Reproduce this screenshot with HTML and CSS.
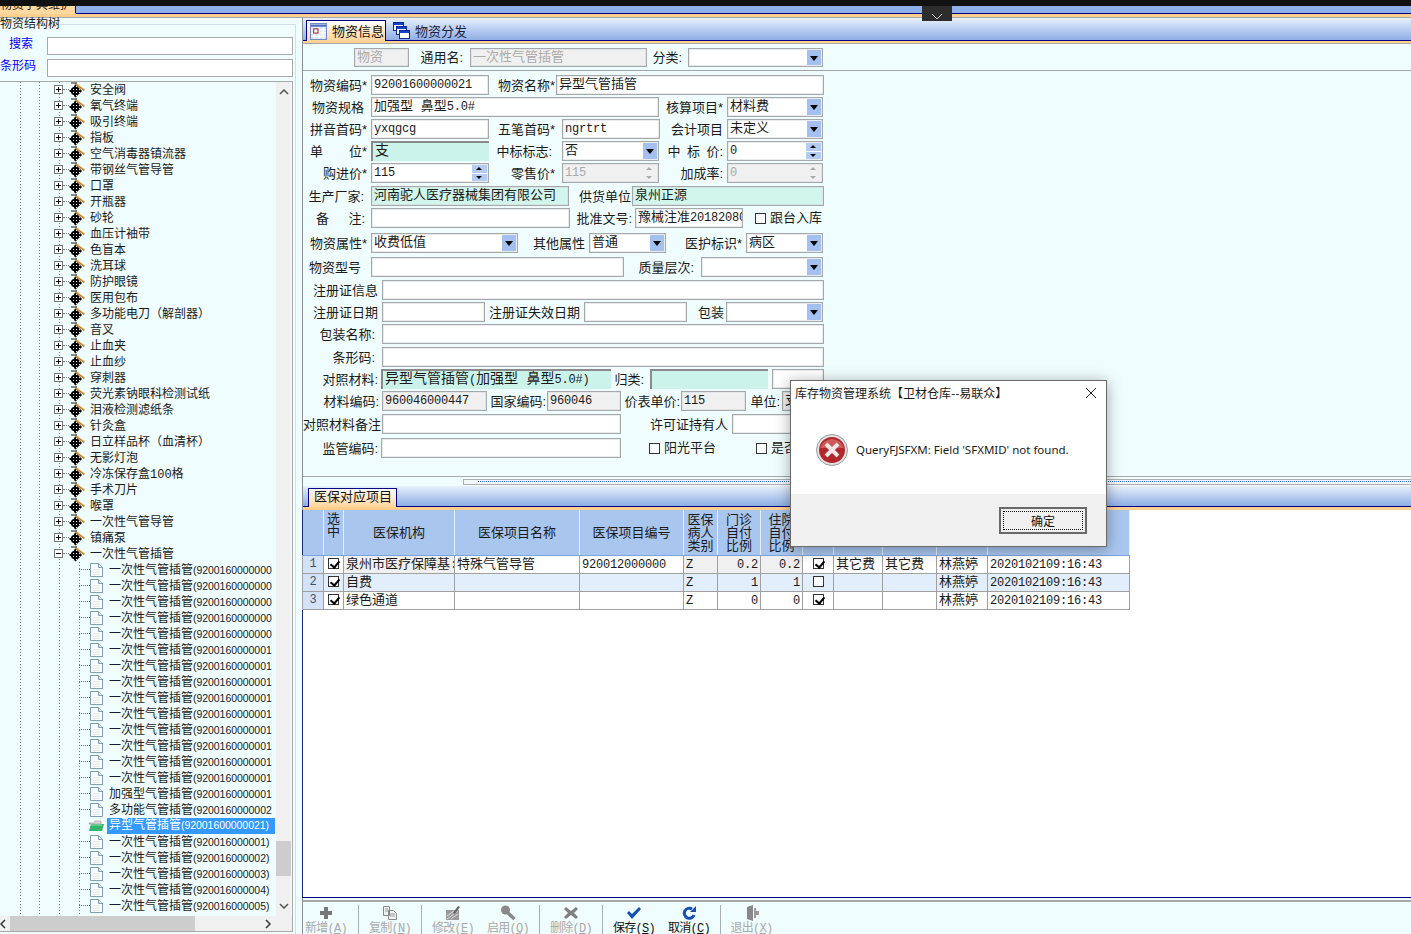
FILE: index.html
```html
<!DOCTYPE html>
<html lang="zh-CN">
<head>
<meta charset="UTF-8" />
<title>物资字典维护</title>
<link rel="stylesheet" href="styles.css">
</head>
<body>
<svg class="defs" width="0" height="0" aria-hidden="true">
  <defs>
    <pattern id="chk" width="3" height="3" patternUnits="userSpaceOnUse">
      <rect width="3" height="3" fill="#000"/><rect x="1" y="1" width="1" height="1" fill="#fff"/>
    </pattern>
    <symbol id="i-node" viewBox="0 0 16 16">
      <path d="M0 9 6.500 2.500 13 9l-6.500 6.500z" fill="url(#chk)"/>
      <path d="M6 1.500 15.500 8.500" stroke="#d08a30" stroke-width="2" fill="none"/>
      <path d="M2 1h6" stroke="#222" stroke-width="1"/>
    </symbol>
    <symbol id="i-plus" viewBox="0 0 9 9">
      <rect x=".5" y=".5" width="8" height="8" fill="#fff" stroke="#777"/>
      <path d="M2 4.500h5M4.500 2v5" stroke="#000"/>
    </symbol>
    <symbol id="i-minus" viewBox="0 0 9 9">
      <rect x=".5" y=".5" width="8" height="8" fill="#fff" stroke="#777"/>
      <path d="M2 4.500h5" stroke="#000"/>
    </symbol>
    <symbol id="i-file" viewBox="0 0 13 14">
      <path d="M.5.500h8l4 4v9H.5z" fill="#fbfdff" stroke="#7f9db9"/>
      <path d="M8.500.500v4h4" fill="#dce6f4" stroke="#7f9db9"/>
      <path d="M3 6.500h7M3 9h7M3 11.500h7" stroke="#dfe6ee"/>
    </symbol>
    <symbol id="i-folder" viewBox="0 0 17 12">
      <path d="M1 3h5l1-2h6v3H1z" fill="#d8d8d8" stroke="#999" stroke-width=".6"/>
      <path d="M1 11 3 4h13l-2 7z" fill="#35b56a"/>
      <path d="M3 5h11" stroke="#8fe0ae"/>
    </symbol>
    <symbol id="i-cal" viewBox="0 0 16 16">
      <rect x=".5" y=".5" width="15" height="15" fill="#dbe6fa" stroke="#6f8bc9"/>
      <path d="M1 2.500h14" stroke="#4f6fc0" stroke-width="2"/>
      <path d="M1 6.500h14M1 9.500h14M1 12.500h14M4.500 4v11M8.500 4v11M12.500 4v11" stroke="#fff"/>
      <rect x="3.500" y="5.500" width="4" height="4" fill="#fff" stroke="#b02020"/>
    </symbol>
    <symbol id="i-wins" viewBox="0 0 17 17">
      <rect x=".5" y=".5" width="10" height="8" fill="#fff" stroke="#0a2a9a"/><path d="M1 2h9" stroke="#1440c8" stroke-width="2"/>
      <rect x="3.500" y="4.500" width="10" height="8" fill="#fff" stroke="#0a2a9a"/><path d="M4 6h9" stroke="#1440c8" stroke-width="2"/>
      <rect x="6.500" y="8.500" width="10" height="8" fill="#fff" stroke="#0a2a9a"/><path d="M7 10h9" stroke="#1440c8" stroke-width="2"/>
    </symbol>
    <symbol id="t-add" viewBox="0 0 16 16"><path d="M6 2h4v4h4v4h-4v4H6v-4H2V6h4z" fill="#777"/></symbol>
    <symbol id="t-copy" viewBox="0 0 16 16">
      <path d="M1.500 1.500h6v9h-6zM6.500 5.500h5l3 3v6h-8z" fill="#eef3f3" stroke="#888"/>
      <path d="M3 4h3M3 6h3M8 9h5M8 11h5" stroke="#999"/>
    </symbol>
    <symbol id="t-edit" viewBox="0 0 16 16">
      <rect x="1" y="5" width="13" height="10" fill="#9a9a9a"/>
      <path d="M2 14 13 6M2 11l7-5M6 14l7-5" stroke="#ddd"/>
      <path d="M8 8 13 1l2 1-5 7z" fill="#666"/>
    </symbol>
    <symbol id="t-key" viewBox="0 0 16 16">
      <circle cx="5.500" cy="5" r="4.500" fill="#888"/>
      <path d="m8 8 6.500 6" stroke="#888" stroke-width="3.500"/>
    </symbol>
    <symbol id="t-del" viewBox="0 0 16 16"><path d="m3 2 5 4 5-4 2 2-4 4 4 4-2 2-5-4-5 4-2-2 4-4-4-4z" fill="#808080"/></symbol>
    <symbol id="t-ok" viewBox="0 0 16 16"><path d="m1 8 2-2 3 3 7-7 2 2-9 10z" fill="#1450b4"/></symbol>
    <symbol id="t-undo" viewBox="0 0 16 16">
      <path d="M13 10a5 5 0 1 1-2-6" fill="none" stroke="#1450b4" stroke-width="3"/>
      <path d="M9 7h6V1z" fill="#1450b4"/>
    </symbol>
    <symbol id="t-exit" viewBox="0 0 16 16">
      <path d="M3 2 9 0v16l-6-2z" fill="#888"/>
      <path d="M10 3h2v3h3v4h-3v3h-2z" fill="#999"/>
    </symbol>
    <symbol id="i-err" viewBox="0 0 32 32">
      <circle cx="16" cy="16" r="15.500" fill="#e4e4e4" stroke="#9a9a9a"/>
      <circle cx="16" cy="16" r="13" fill="#b3262b"/>
      <path d="M4 14a12.500 12.500 0 0 1 24 0z" fill="#cf5a5a"/>
      <path d="m10 10 12 12M22 10 10 22" stroke="#f4e6e6" stroke-width="4"/>
    </symbol>
  </defs>
</svg>

<div class="topbar"></div>
<div class="mdi-tabs">
  <div class="mdi-tab">物资字典维护</div>
</div>
<button class="collapse" aria-label="collapse">
  <svg width="12" height="7" viewBox="0 0 12 7"><path d="M1 1l5 5 5-5" fill="none" stroke="#ccc"/></svg>
</button>

<div class="app">
  <aside class="side">
    <div class="group">
      <div class="group-cap">物资结构树</div>
      <div class="find-row"><label class="find-label">搜索</label><div class="find-box"></div></div>
      <div class="find-row"><label class="find-label find-left">条形码</label><div class="find-box"></div></div>
      <div class="tree-box">
        <div class="tree-main">
          <div class="tree">
            <div class="node"><svg class="exp"><use href="#i-plus"/></svg><i class="dash"></i><svg class="ico"><use href="#i-node"/></svg><span>安全阀</span></div>
            <div class="node"><svg class="exp"><use href="#i-plus"/></svg><i class="dash"></i><svg class="ico"><use href="#i-node"/></svg><span>氧气终端</span></div>
            <div class="node"><svg class="exp"><use href="#i-plus"/></svg><i class="dash"></i><svg class="ico"><use href="#i-node"/></svg><span>吸引终端</span></div>
            <div class="node"><svg class="exp"><use href="#i-plus"/></svg><i class="dash"></i><svg class="ico"><use href="#i-node"/></svg><span>指板</span></div>
            <div class="node"><svg class="exp"><use href="#i-plus"/></svg><i class="dash"></i><svg class="ico"><use href="#i-node"/></svg><span>空气消毒器镇流器</span></div>
            <div class="node"><svg class="exp"><use href="#i-plus"/></svg><i class="dash"></i><svg class="ico"><use href="#i-node"/></svg><span>带钢丝气管导管</span></div>
            <div class="node"><svg class="exp"><use href="#i-plus"/></svg><i class="dash"></i><svg class="ico"><use href="#i-node"/></svg><span>口罩</span></div>
            <div class="node"><svg class="exp"><use href="#i-plus"/></svg><i class="dash"></i><svg class="ico"><use href="#i-node"/></svg><span>开瓶器</span></div>
            <div class="node"><svg class="exp"><use href="#i-plus"/></svg><i class="dash"></i><svg class="ico"><use href="#i-node"/></svg><span>砂轮</span></div>
            <div class="node"><svg class="exp"><use href="#i-plus"/></svg><i class="dash"></i><svg class="ico"><use href="#i-node"/></svg><span>血压计袖带</span></div>
            <div class="node"><svg class="exp"><use href="#i-plus"/></svg><i class="dash"></i><svg class="ico"><use href="#i-node"/></svg><span>色盲本</span></div>
            <div class="node"><svg class="exp"><use href="#i-plus"/></svg><i class="dash"></i><svg class="ico"><use href="#i-node"/></svg><span>洗耳球</span></div>
            <div class="node"><svg class="exp"><use href="#i-plus"/></svg><i class="dash"></i><svg class="ico"><use href="#i-node"/></svg><span>防护眼镜</span></div>
            <div class="node"><svg class="exp"><use href="#i-plus"/></svg><i class="dash"></i><svg class="ico"><use href="#i-node"/></svg><span>医用包布</span></div>
            <div class="node"><svg class="exp"><use href="#i-plus"/></svg><i class="dash"></i><svg class="ico"><use href="#i-node"/></svg><span>多功能电刀（解剖器）</span></div>
            <div class="node"><svg class="exp"><use href="#i-plus"/></svg><i class="dash"></i><svg class="ico"><use href="#i-node"/></svg><span>音叉</span></div>
            <div class="node"><svg class="exp"><use href="#i-plus"/></svg><i class="dash"></i><svg class="ico"><use href="#i-node"/></svg><span>止血夹</span></div>
            <div class="node"><svg class="exp"><use href="#i-plus"/></svg><i class="dash"></i><svg class="ico"><use href="#i-node"/></svg><span>止血纱</span></div>
            <div class="node"><svg class="exp"><use href="#i-plus"/></svg><i class="dash"></i><svg class="ico"><use href="#i-node"/></svg><span>穿刺器</span></div>
            <div class="node"><svg class="exp"><use href="#i-plus"/></svg><i class="dash"></i><svg class="ico"><use href="#i-node"/></svg><span>荧光素钠眼科检测试纸</span></div>
            <div class="node"><svg class="exp"><use href="#i-plus"/></svg><i class="dash"></i><svg class="ico"><use href="#i-node"/></svg><span>泪液检测滤纸条</span></div>
            <div class="node"><svg class="exp"><use href="#i-plus"/></svg><i class="dash"></i><svg class="ico"><use href="#i-node"/></svg><span>针灸盒</span></div>
            <div class="node"><svg class="exp"><use href="#i-plus"/></svg><i class="dash"></i><svg class="ico"><use href="#i-node"/></svg><span>日立样品杯（血清杯）</span></div>
            <div class="node"><svg class="exp"><use href="#i-plus"/></svg><i class="dash"></i><svg class="ico"><use href="#i-node"/></svg><span>无影灯泡</span></div>
            <div class="node"><svg class="exp"><use href="#i-plus"/></svg><i class="dash"></i><svg class="ico"><use href="#i-node"/></svg><span>冷冻保存盒100格</span></div>
            <div class="node"><svg class="exp"><use href="#i-plus"/></svg><i class="dash"></i><svg class="ico"><use href="#i-node"/></svg><span>手术刀片</span></div>
            <div class="node"><svg class="exp"><use href="#i-plus"/></svg><i class="dash"></i><svg class="ico"><use href="#i-node"/></svg><span>喉罩</span></div>
            <div class="node"><svg class="exp"><use href="#i-plus"/></svg><i class="dash"></i><svg class="ico"><use href="#i-node"/></svg><span>一次性气管导管</span></div>
            <div class="node"><svg class="exp"><use href="#i-plus"/></svg><i class="dash"></i><svg class="ico"><use href="#i-node"/></svg><span>镇痛泵</span></div>
            <div class="node"><svg class="exp"><use href="#i-minus"/></svg><i class="dash"></i><svg class="ico"><use href="#i-node"/></svg><span>一次性气管插管</span></div>
            <div class="kids">
              <div class="leaf"><i class="dash"></i><svg class="doc"><use href="#i-file"/></svg><span>一次性气管插管<b>(9200160000000</b></span></div>
              <div class="leaf"><i class="dash"></i><svg class="doc"><use href="#i-file"/></svg><span>一次性气管插管<b>(9200160000000</b></span></div>
              <div class="leaf"><i class="dash"></i><svg class="doc"><use href="#i-file"/></svg><span>一次性气管插管<b>(9200160000000</b></span></div>
              <div class="leaf"><i class="dash"></i><svg class="doc"><use href="#i-file"/></svg><span>一次性气管插管<b>(9200160000000</b></span></div>
              <div class="leaf"><i class="dash"></i><svg class="doc"><use href="#i-file"/></svg><span>一次性气管插管<b>(9200160000000</b></span></div>
              <div class="leaf"><i class="dash"></i><svg class="doc"><use href="#i-file"/></svg><span>一次性气管插管<b>(9200160000001</b></span></div>
              <div class="leaf"><i class="dash"></i><svg class="doc"><use href="#i-file"/></svg><span>一次性气管插管<b>(9200160000001</b></span></div>
              <div class="leaf"><i class="dash"></i><svg class="doc"><use href="#i-file"/></svg><span>一次性气管插管<b>(9200160000001</b></span></div>
              <div class="leaf"><i class="dash"></i><svg class="doc"><use href="#i-file"/></svg><span>一次性气管插管<b>(9200160000001</b></span></div>
              <div class="leaf"><i class="dash"></i><svg class="doc"><use href="#i-file"/></svg><span>一次性气管插管<b>(9200160000001</b></span></div>
              <div class="leaf"><i class="dash"></i><svg class="doc"><use href="#i-file"/></svg><span>一次性气管插管<b>(9200160000001</b></span></div>
              <div class="leaf"><i class="dash"></i><svg class="doc"><use href="#i-file"/></svg><span>一次性气管插管<b>(9200160000001</b></span></div>
              <div class="leaf"><i class="dash"></i><svg class="doc"><use href="#i-file"/></svg><span>一次性气管插管<b>(9200160000001</b></span></div>
              <div class="leaf"><i class="dash"></i><svg class="doc"><use href="#i-file"/></svg><span>一次性气管插管<b>(9200160000001</b></span></div>
              <div class="leaf"><i class="dash"></i><svg class="doc"><use href="#i-file"/></svg><span>加强型气管插管<b>(9200160000001</b></span></div>
              <div class="leaf"><i class="dash"></i><svg class="doc"><use href="#i-file"/></svg><span>多功能气管插管<b>(9200160000002</b></span></div>
              <div class="leaf current"><svg class="opened"><use href="#i-folder"/></svg><span>异型气管插管<b>(92001600000021)</b></span></div>
              <div class="leaf"><i class="dash"></i><svg class="doc"><use href="#i-file"/></svg><span>一次性气管插管<b>(920016000001)</b></span></div>
              <div class="leaf"><i class="dash"></i><svg class="doc"><use href="#i-file"/></svg><span>一次性气管插管<b>(920016000002)</b></span></div>
              <div class="leaf"><i class="dash"></i><svg class="doc"><use href="#i-file"/></svg><span>一次性气管插管<b>(920016000003)</b></span></div>
              <div class="leaf"><i class="dash"></i><svg class="doc"><use href="#i-file"/></svg><span>一次性气管插管<b>(920016000004)</b></span></div>
              <div class="leaf"><i class="dash"></i><svg class="doc"><use href="#i-file"/></svg><span>一次性气管插管<b>(920016000005)</b></span></div>
            </div>
          </div>
          <div class="vscroll">
            <svg class="chev" viewBox="0 0 10 6"><path d="M1 5l4-4 4 4" fill="none" stroke="#555" stroke-width="1.500"/></svg>
            <div class="vthumb"></div>
            <svg class="chev" viewBox="0 0 10 6"><path d="M1 1l4 4 4-4" fill="none" stroke="#555" stroke-width="1.500"/></svg>
          </div>
        </div>
        <div class="hscroll">
          <svg class="chev-h" viewBox="0 0 6 10"><path d="M5 1 1 5l4 4" fill="none" stroke="#333" stroke-width="1.500"/></svg>
          <div class="hthumb"></div>
          <svg class="chev-h" viewBox="0 0 6 10"><path d="M1 1l4 4-4 4" fill="none" stroke="#333" stroke-width="1.500"/></svg>
        </div>
      </div>
    </div>
  </aside>

  <main class="pane">
    <div class="tabs">
      <div class="tab active"><svg class="tab-ico"><use href="#i-cal"/></svg><span class="tab-text">物资信息</span></div>
      <div class="tab"><svg class="tab-ico"><use href="#i-wins"/></svg><span class="tab-text">物资分发</span></div>
    </div>
    <div class="tabs-line"></div>

    <section class="form">
      <div class="form-head">
        <div class="row head-row">
          <div class="fld off w-55 ml-51">物资</div>
          <label class="w-61 pr-7">通用名:</label>
          <div class="fld off w-177">一次性气管插管</div>
          <label class="w-41 pr-6">分类:</label>
          <div class="fld w-135"><span class="arrow"></span></div>
        </div>
      </div>
      <div class="form-body">
        <div class="row"><label class="w-68">物资编码*</label><div class="fld code w-118">92001600000021</div><label class="w-67 pr-1">物资名称*</label><div class="fld w-268">异型气管插管</div></div>
        <div class="row"><label class="w-68 pr-7">物资规格</label><div class="fld w-288">加强型 鼻型<span class="code">5.0#</span></div><label class="w-68">核算项目*</label><div class="fld w-96">材料费<span class="arrow"></span></div></div>
        <div class="row"><label class="w-68">拼音首码*</label><div class="fld code w-118">yxqgcg</div><label class="w-73 pr-7">五笔首码*</label><div class="fld code w-98">ngrtrt</div><label class="w-67">会计项目</label><div class="fld w-96">未定义<span class="arrow"></span></div></div>
        <div class="row"><label class="w-68">单&emsp;&emsp;位*</label><div class="fld big teal-in w-118">支</div><label class="w-73 pr-10">中标标志:</label><div class="fld w-97">否<span class="arrow"></span></div><label class="w-68">中&ensp;标&ensp;价:</label><div class="fld code w-96">0<span class="spin"><i></i><i></i></span></div></div>
        <div class="row"><label class="w-68">购进价*</label><div class="fld code w-118">115<span class="spin"><i></i><i></i></span></div><label class="w-73 pr-7">零售价*</label><div class="fld off code w-97">115<span class="spin dim"><i></i><i></i></span></div><label class="w-68">加成率:</label><div class="fld off code w-96">0<span class="spin dim"><i></i><i></i></span></div></div>
        <div class="row mt-1"><label class="w-68 pr-7">生产厂家:</label><div class="fld teal w-198">河南驼人医疗器械集团有限公司</div><label class="w-63 pr-1">供货单位</label><div class="fld teal w-192">泉州正源</div></div>
        <div class="row"><label class="w-68 pr-6">备&emsp;&ensp;注:</label><div class="fld w-199">&nbsp;</div><label class="w-65 pr-3">批准文号:</label><div class="fld w-108">豫械注准<span class="code">20182080</span></div><span class="check ml-12"></span><span class="check-text">跟台入库</span></div>
        <div class="row mt-3"><label class="w-68">物资属性*</label><div class="fld w-147">收费低值<span class="arrow"></span></div><label class="w-71">其他属性</label><div class="fld w-77">普通<span class="arrow"></span></div><label class="w-80">医护标识*</label><div class="fld w-77">病区<span class="arrow"></span></div></div>
        <div class="row mt-2"><label class="w-68 pr-10">物资型号</label><div class="fld w-253">&nbsp;</div><label class="w-77 pr-7">质量层次:</label><div class="fld w-122"><span class="arrow"></span></div></div>
        <div class="row mt-1"><label class="w-79">注册证信息</label><div class="fld w-442">&nbsp;</div></div>
        <div class="row"><label class="w-79">注册证日期</label><div class="fld w-103">&nbsp;</div><label class="w-99">注册证失效日期</label><div class="fld w-103">&nbsp;</div><label class="w-39 pr-2">包装</label><div class="fld w-97"><span class="arrow"></span></div></div>
        <div class="row"><label class="w-79 pr-7">包装名称:</label><div class="fld w-442">&nbsp;</div></div>
        <div class="row mt-1"><label class="w-79 pr-7">条形码:</label><div class="fld w-442">&nbsp;</div></div>
        <div class="row"><label class="w-78 pr-3">对照材料:</label><div class="fld big teal-in w-230">异型气管插管<span class="code">(</span>加强型 鼻型<span class="code">5.0#)</span></div><label class="w-39 pr-6">归类:</label><div class="fld teal-in w-118">&nbsp;</div><div class="fld ml-4 w-52">&nbsp;</div></div>
        <div class="row"><label class="w-79 pr-3">材料编码:</label><div class="fld gray code w-105">960046000447</div><label class="w-60 pr-1">国家编码:</label><div class="fld gray code w-74">960046</div><label class="w-60 pr-1">价表单价:</label><div class="fld gray code w-65">115</div><label class="w-36 pr-2">单位:</label><div class="fld gray w-42">支</div></div>
        <div class="row mt-1"><label class="w-79 pr-1">对照材料备注</label><div class="fld w-239">&nbsp;</div><label class="w-111">许可证持有人</label><div class="fld w-92">&nbsp;</div></div>
        <div class="row mt-2"><label class="w-78 pr-3">监管编码:</label><div class="fld w-240">&nbsp;</div><span class="check ml-28"></span><span class="check-text">阳光平台</span><span class="check ml-40"></span><span class="check-text">是否</span></div>
      </div>
      <div class="splitter"><div class="split-grip"><i></i></div></div>
    </section>

    <div class="tabs sub">
      <div class="tab active sub-tab"><span>医保对应项目</span></div>
    </div>
    <div class="tabs-line thin"></div>

    <section class="grid-wrap">
      <table class="grid">
        <colgroup>
          <col class="c-21"><col class="c-20"><col class="c-111"><col class="c-125"><col class="c-104"><col class="c-34"><col class="c-43"><col class="c-42"><col class="c-31"><col class="c-49"><col class="c-54"><col class="c-51"><col class="c-142">
        </colgroup>
        <thead>
          <tr>
            <th></th><th class="th-sel">选<br>中</th><th>医保机构</th><th>医保项目名称</th><th>医保项目编号</th><th>医保<br>病人<br>类别</th><th>门诊<br>自付<br>比例</th><th>住院<br>自付<br>比例</th><th></th><th></th><th></th><th></th><th></th>
          </tr>
        </thead>
        <tbody>
          <tr>
            <td class="idx">1</td><td><span class="check on"></span></td><td class="soft">泉州市医疗保障基:</td><td>特殊气管导管</td><td class="mono">920012000000</td><td class="soft mono">Z</td><td class="soft num mono">0.2</td><td class="soft num mono">0.2</td><td><span class="check on"></span></td><td>其它费</td><td>其它费</td><td>林燕婷</td><td class="mono">2020102109:16:43</td>
          </tr>
          <tr class="alt">
            <td class="idx">2</td><td><span class="check on"></span></td><td>自费</td><td></td><td></td><td class="mono">Z</td><td class="num mono">1</td><td class="num mono">1</td><td><span class="check"></span></td><td></td><td></td><td>林燕婷</td><td class="mono">2020102109:16:43</td>
          </tr>
          <tr>
            <td class="idx">3</td><td><span class="check on"></span></td><td>绿色通道</td><td></td><td></td><td class="mono">Z</td><td class="num mono">0</td><td class="num mono">0</td><td><span class="check on"></span></td><td></td><td></td><td>林燕婷</td><td class="mono">2020102109:16:43</td>
          </tr>
        </tbody>
      </table>
    </section>

    <footer class="toolbar">
      <div class="tool-group first"><div class="tool"><svg class="tool-ico"><use href="#t-add"/></svg>新增(<u>A</u>)</div></div>
      <div class="tool-group"><div class="tool"><svg class="tool-ico"><use href="#t-copy"/></svg>复制(<u>N</u>)</div></div>
      <div class="tool-group"><div class="tool"><svg class="tool-ico"><use href="#t-edit"/></svg>修改(<u>E</u>)</div><div class="tool"><svg class="tool-ico"><use href="#t-key"/></svg>启用(<u>Q</u>)</div></div>
      <div class="tool-group"><div class="tool"><svg class="tool-ico"><use href="#t-del"/></svg>删除(<u>D</u>)</div></div>
      <div class="tool-group"><div class="tool live"><svg class="tool-ico"><use href="#t-ok"/></svg>保存(<u>S</u>)</div><div class="tool live"><svg class="tool-ico"><use href="#t-undo"/></svg>取消(<u>C</u>)</div></div>
      <div class="tool-group last"><div class="tool"><svg class="tool-ico"><use href="#t-exit"/></svg>退出(<u>X</u>)</div></div>
    </footer>
  </main>
</div>

<div class="dialog" role="alertdialog">
  <div class="dialog-title">
    <span>库存物资管理系统【卫材仓库--易联众】</span>
    <svg class="dialog-x" viewBox="0 0 10 10"><path d="M0 0l10 10M10 0 0 10" stroke="#222" fill="none"/></svg>
  </div>
  <div class="dialog-body">
    <svg class="dialog-ico"><use href="#i-err"/></svg>
    <span>QueryFJSFXM: Field 'SFXMID' not found.</span>
  </div>
  <div class="dialog-foot">
    <button class="dialog-btn"><span>确定</span></button>
  </div>
</div>
</body>
</html>
```

FILE: styles.css
```css
* {
  box-sizing: border-box;
}
html, body {
  margin: 0;
  padding: 0;
  height: 934px;
  overflow: hidden;
}
body {
  position: relative;
  font-family: "Liberation Mono", "Noto Sans CJK SC", monospace;
  font-size: 12px;
  line-height: 14px;
  color: #1a1a1a;
  background: #f0fdff;
}
.defs {
  position: absolute;
}

/* top strip */
.topbar {
  height: 6px;
  background: #111;
}
.mdi-tabs {
  height: 12px;
  background: linear-gradient(#8fb0e8 0 7px, #000080 7px 8px, #ffcf90 8px 11px, #a8a8a8 11px);
  overflow: hidden;
}
.mdi-tab {
  width: 76px;
  height: 8px;
  background: #ffd9a0;
  border-right: 1px solid #000080;
  border-bottom: 1px solid #ffd9a0;
  margin-top: 0;
  white-space: nowrap;
  overflow: hidden;
  line-height: 1px;
}
.collapse {
  position: absolute;
  left: 922px;
  top: 6px;
  width: 30px;
  height: 15px;
  background: #2d2d2d;
  border: 0;
  padding: 2px 0 0;
}

.app {
  display: flex;
  height: 916px;
}

/* left tree */
.side {
  width: 302px;
  flex: none;
  padding: 6px 6px 0 0;
}
.group {
  height: 100%;
  border-top: 1px solid #cfe0ea;
  border-right: 1px solid #cfe0ea;
  padding-right: 2px;
}
.group-cap {
  display: block;
  width: 56px;
  height: 14px;
  margin-top: -7px;
  margin-bottom: 5px;
  background: #f0fdff;
  white-space: nowrap;
}
.find-row {
  display: flex;
  align-items: center;
  height: 18px;
  margin-bottom: 4px;
}
.find-label {
  width: 47px;
  height: 16px;
  padding-right: 14px;
  text-align: right;
  color: #0000ff;
}
.find-left {
  padding-right: 13px;
  white-space: nowrap;
}
.find-box {
  flex: 1;
  height: 18px;
  background: #fff;
  border: 1px solid #a9a9a9;
}
.tree-box {
  height: 851px;
  margin-left: -1px;
  border: 1px solid #a9a9a9;
  border-left: 0;
  display: flex;
  flex-direction: column;
}
.tree-main {
  display: flex;
  height: 834px;
}
.tree {
  width: 277px;
  overflow: hidden;
  background-image:
    repeating-linear-gradient(#777 0 1px, transparent 1px 3px),
    repeating-linear-gradient(#777 0 1px, transparent 1px 3px),
    repeating-linear-gradient(#777 0 1px, transparent 1px 3px);
  background-size: 1px 100%;
  background-repeat: no-repeat;
  background-position: 21px 0, 40px 0, 60px 0;
}
.node, .leaf {
  display: flex;
  align-items: center;
  height: 16px;
  white-space: nowrap;
}
.node span {
  padding-top: 2px;
}
.node {
  padding-left: 55px;
}
.exp {
  width: 9px;
  height: 9px;
  flex: none;
  margin-bottom: 2px;
}
.dash {
  flex: none;
  width: 6px;
  margin-bottom: 1px;
  border-top: 1px dotted #777;
}
.ico {
  width: 16px;
  height: 16px;
  flex: none;
  margin-right: 5px;
}
.kids {
  background-image: repeating-linear-gradient(#777 0 1px, transparent 1px 3px);
  background-size: 1px 100%;
  background-repeat: no-repeat;
  background-position: 80px 0;
}
.leaf {
  padding-left: 80px;
}
.leaf .dash {
  width: 11px;
}
.leaf b {
  font-family: "Liberation Sans", sans-serif;
  font-weight: 400;
  font-size: 10.500px;
  letter-spacing: -.05px;
}
.doc {
  width: 13px;
  height: 14px;
  flex: none;
  margin-right: 6px;
}
.opened {
  width: 17px;
  height: 12px;
  flex: none;
  margin: 0 2px 0 9px;
}
.leaf.current span {
  flex: 1;
  height: 16px;
  margin-right: 1px;
  background: #3399ff;
  color: #fff;
  padding: 0 0 0 2px;
}
.vscroll {
  width: 15px;
  margin-left: 0;
  background: #f0f0f0;
  display: flex;
  flex-direction: column;
  align-items: center;
  padding-top: 7px;
}
.chev {
  width: 10px;
  height: 6px;
  flex: none;
}
.vthumb {
  width: 15px;
  height: 35px;
  flex: none;
  margin-top: 746px;
  margin-bottom: 27px;
  background: #cdcdcd;
}
.hscroll {
  height: 15px;
  background: #f0f0f0;
  display: flex;
  align-items: center;
  padding-left: 1px;
}
.chev-h {
  width: 6px;
  height: 10px;
  flex: none;
}
.hthumb {
  width: 185px;
  height: 15px;
  flex: none;
  margin-left: 4px;
  margin-right: 70px;
  background: #cdcdcd;
}

/* right pane */
.pane {
  flex: 1;
  min-width: 0;
  border-left: 1px solid #8a8f94;
  display: flex;
  flex-direction: column;
  font-size: 13px;
}
.tabs {
  height: 23px;
  flex: none;
  display: flex;
  align-items: flex-end;
  padding-left: 3px;
  background: linear-gradient(#e8f0fc, #8eaee6);
  border-bottom: 1px solid #000080;
}
.tabs-line {
  height: 3px;
  flex: none;
  background: #ffcf90;
  border-bottom: 1px solid #a8a8a8;
}
.tabs-line.thin {
  border-bottom: 0;
}
.tab {
  height: 21px;
  display: flex;
  align-items: center;
  margin-bottom: -1px;
  padding: 0 6px 0 7px;
  white-space: nowrap;
  color: #1a2440;
}
.tab.active {
  width: 80px;
  background: linear-gradient(#fff, #ffd49a);
  border: 1px solid #000080;
  border-bottom: 0;
  color: #111;
  padding-left: 3px;
}
.tab-ico {
  width: 17px;
  height: 17px;
  flex: none;
  margin-right: 5px;
}
.tab-text {
  padding-top: 4px;
}
.tabs.sub {
  height: 21px;
  padding-left: 5px;
}
.sub-tab.active {
  width: 89px;
  height: 19px;
  padding-left: 5px;
}

.form {
  flex: none;
}
.form-head {
  height: 27px;
  padding-top: 4px;
  border-bottom: 1px solid #a0a4a8;
}
.form-body {
  height: 405px;
  padding-top: 4px;
  overflow: hidden;
  display: flex;
  flex-direction: column;
  gap: 2px;
}
.row {
  display: flex;
  flex: none;
  align-items: center;
  height: 20px;
  white-space: nowrap;
}
.head-row {
  height: 19px;
}
.row label {
  flex: none;
  font-family: "Liberation Sans", "Noto Sans CJK SC", sans-serif;
  text-align: right;
  padding-right: 4px;
  padding-top: 1px;
}
.head-row label {
  padding-top: 0;
}
.fld {
  flex: none;
  position: relative;
  height: 100%;
  padding: 2px 2px 0;
  background: #fff;
  border: 1px solid #a5a9ac;
  box-shadow: inset 0 0 0 .500px #d5d8da;
  overflow: hidden;
  white-space: nowrap;
}
.code, .mono {
  font-size: 12px;
  letter-spacing: -.2px;
}
.off {
  background: #f0f0f0;
  color: #aaa;
}
.gray {
  background: #f0f0f0;
}
.teal {
  background: #d2f5ec;
}
.teal-in {
  background: #ccf3ea;
  border-color: #8a8a8a #ccf3ea #ccf3ea #8a8a8a;
  border-width: 2px 0 0 2px;
  box-shadow: none;
}
.big {
  font-size: 14px;
  line-height: 16px;
  padding: 0 2px;
}
.arrow {
  position: absolute;
  right: 1px;
  top: 1px;
  bottom: 1px;
  width: 14px;
  background: #a3c0f0;
}
.arrow::after {
  content: "";
  position: absolute;
  left: 3px;
  top: 6px;
  border: 4px solid transparent;
  border-top: 5px solid #000;
  border-bottom: 0;
}
.spin {
  position: absolute;
  right: 1px;
  top: 1px;
  bottom: 1px;
  width: 15px;
  display: flex;
  flex-direction: column;
  gap: 1px;
}
.spin i {
  position: relative;
  flex: 1;
  background: #b4cbf3;
}
.spin i::after {
  content: "";
  position: absolute;
  left: 4px;
  top: 2px;
  border: 3px solid transparent;
  border-bottom: 3px solid #000;
  border-top: 0;
}
.spin i:last-child::after {
  border-top: 3px solid #000;
  border-bottom: 0;
}
.spin.dim i {
  background: #f0f0f0;
}
.spin.dim i::after {
  border-bottom-color: #aaa;
}
.spin.dim i:last-child::after {
  border-top-color: #aaa;
}
.check {
  display: inline-block;
  flex: none;
  position: relative;
  width: 11px;
  height: 11px;
  vertical-align: middle;
  background: #fff;
  border: 1px solid #333;
}
.check.on::after {
  content: "";
  position: absolute;
  left: 3px;
  top: 0;
  width: 4px;
  height: 7px;
  border: solid #000;
  border-width: 0 2px 2px 0;
  transform: rotate(40deg);
}
.check-text {
  margin-left: 4px;
  padding-top: 1px;
}

/* widths */
.w-36 { width: 36px; }
.w-39 { width: 39px; }
.w-41 { width: 41px; }
.w-42 { width: 42px; }
.w-52 { width: 52px; }
.w-55 { width: 55px; }
.w-60 { width: 60px; }
.w-61 { width: 61px; }
.w-63 { width: 63px; }
.w-65 { width: 65px; }
.w-67 { width: 67px; }
.w-68 { width: 68px; }
.w-71 { width: 71px; }
.w-73 { width: 73px; }
.w-74 { width: 74px; }
.w-77 { width: 77px; }
.w-78 { width: 78px; }
.w-79 { width: 79px; }
.w-80 { width: 80px; }
.w-92 { width: 92px; }
.w-96 { width: 96px; }
.w-97 { width: 97px; }
.w-98 { width: 98px; }
.w-99 { width: 99px; }
.w-103 { width: 103px; }
.w-105 { width: 105px; }
.w-108 { width: 108px; }
.w-111 { width: 111px; }
.w-118 { width: 118px; }
.w-122 { width: 122px; }
.w-135 { width: 135px; }
.w-147 { width: 147px; }
.w-177 { width: 177px; }
.w-192 { width: 192px; }
.w-198 { width: 198px; }
.w-199 { width: 199px; }
.w-230 { width: 230px; }
.w-239 { width: 239px; }
.w-240 { width: 240px; }
.w-253 { width: 253px; }
.w-268 { width: 268px; }
.w-288 { width: 288px; }
.w-442 { width: 442px; }
.ml-4 { margin-left: 4px; }
.ml-12 { margin-left: 12px; }
.ml-28 { margin-left: 28px; }
.ml-40 { margin-left: 40px; }
.ml-51 { margin-left: 51px; }
.mt-1 { margin-top: 1px; }
.mt-2 { margin-top: 2px; }
.mt-3 { margin-top: 3px; }
.row label.pr-1 { padding-right: 1px; }
.row label.pr-2 { padding-right: 2px; }
.row label.pr-3 { padding-right: 3px; }
.row label.pr-6 { padding-right: 6px; }
.row label.pr-7 { padding-right: 7px; }
.row label.pr-10 { padding-right: 10px; }

.splitter {
  height: 10px;
  border-top: 1px solid #a8a8a8;
  padding-top: 2px;
}
.split-grip {
  height: 6px;
  margin-left: 160px;
  background: #f4f8fb;
  border: 1px solid #b0b0b0;
  border-right: 0;
  padding: 1px 0 0 14px;
}
.split-grip i {
  display: block;
  border-top: 1px dotted #2a70c8;
}

/* grid */
.grid-wrap {
  flex: 1;
  min-height: 0;
  background: #fff;
  border-bottom: 1px solid #000080;
  border-left: 1px solid #1a2a70;
  margin-left: -1px;
}
.grid {
  table-layout: fixed;
  width: 827px;
  margin-left: -1px;
  border-collapse: collapse;
}
.c-21 { width: 21px; }
.c-20 { width: 20px; }
.c-111 { width: 111px; }
.c-125 { width: 125px; }
.c-104 { width: 104px; }
.c-34 { width: 34px; }
.c-43 { width: 43px; }
.c-42 { width: 42px; }
.c-31 { width: 31px; }
.c-49 { width: 49px; }
.c-54 { width: 54px; }
.c-51 { width: 51px; }
.c-142 { width: 142px; }
.grid th {
  height: 45px;
  padding: 2px 0 0;
  font-weight: 400;
  line-height: 13px;
  background: #a9c6ef;
  border-right: 1px solid #e6effb;
  border-bottom: 1px solid #7ea2dc;
}
.grid th.th-sel {
  padding: 0 0 13px;
}
.grid td {
  height: 18px;
  padding: 2px 2px 0;
  border: 1px solid #a0a0a0;
  white-space: nowrap;
  overflow: hidden;
}
.grid .alt td {
  background: #e2eefc;
}
.grid td:nth-child(2), .grid td:nth-child(9) {
  text-align: center;
  padding: 0;
}
.grid td.idx, .grid .alt td.idx {
  text-align: center;
  font-size: 12px;
  padding: 0;
  color: #44506a;
  background: #d3e2f6;
}
.grid td.soft {
  background: #f0f0f0;
}
.grid .alt td.soft {
  background: #e2eefc;
}
.num {
  text-align: right;
}

/* bottom buttons */
.toolbar {
  height: 34px;
  flex: none;
  display: flex;
  align-items: stretch;
  margin-top: 2px;
  padding-top: 3px;
  border-top: 2px solid #a8a8a8;
  overflow: hidden;
  font-size: 12px;
}
.tool-group {
  display: flex;
  justify-content: center;
  flex: none;
  width: 63px;
  border-right: 1px solid #a8b0b4;
}
.tool-group:nth-child(3), .tool-group:nth-child(5) {
  width: 118px;
}
.tool-group.first {
  width: 56px;
  padding-right: 9px;
}
.tool-group.last {
  width: auto;
  border-right: 0;
  padding-left: 3px;
}
.tool {
  width: 55px;
  flex: none;
  text-align: center;
  color: #aaa;
  white-space: nowrap;
  letter-spacing: -.7px;
}
.tool.live {
  color: #111;
}
.tool-ico {
  display: block;
  width: 16px;
  height: 16px;
  margin: 0 auto 1px;
}

/* message box */
.dialog {
  position: absolute;
  left: 790px;
  top: 380px;
  width: 317px;
  height: 167px;
  background: #fff;
  border: 1px solid #6a6a6a;
  box-shadow: 0 2px 14px rgba(0, 0, 0, .35);
  display: flex;
  flex-direction: column;
  font-family: "Noto Sans", "Noto Sans CJK SC", sans-serif;
}
.dialog-title {
  height: 24px;
  flex: none;
  display: flex;
  align-items: center;
  justify-content: space-between;
  padding: 0 10px 0 4px;
  font-family: "Noto Sans CJK SC", sans-serif;
}
.dialog-x {
  width: 10px;
  height: 10px;
}
.dialog-body {
  flex: 1;
  display: flex;
  align-items: center;
  padding: 0 0 0 25px;
  font-size: 11.500px;
}
.dialog-ico {
  width: 32px;
  height: 32px;
  margin-right: 8px;
}
.dialog-foot {
  height: 52px;
  flex: none;
  background: #f0f0f0;
  display: flex;
  align-items: center;
  justify-content: flex-end;
  padding-right: 19px;
}
.dialog-btn {
  width: 88px;
  height: 27px;
  padding: 2px;
  background: #f0f0f0;
  border: 2px solid #6a6a6a;
  font: 12px "Noto Sans CJK SC", sans-serif;
  color: #111;
}
.dialog-btn span {
  display: block;
  line-height: 17px;
  border: 1px dotted #111;
}
```
